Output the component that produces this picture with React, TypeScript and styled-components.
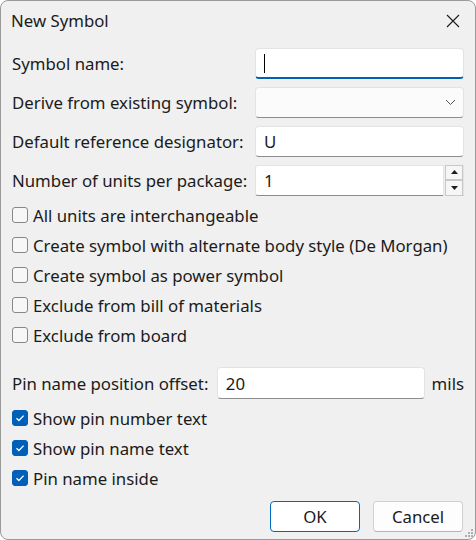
import React from "react";
import styled, { createGlobalStyle } from "styled-components";

const GlobalStyle = createGlobalStyle`
	html, body {
		margin: 0;
		padding: 0;
		background: #ffffff;
	}
	* {
		box-sizing: border-box;
	}
`;

const Window = styled.div`
	width: 476px;
	height: 540px;
	background: #f0f0f0;
	border: 1px solid #9a9a9a;
	border-radius: 8px;
	font-family: "Noto Sans", "Open Sans", sans-serif;
	font-size: 16.8px;
	color: #1b1b1b;
	display: flex;
	flex-direction: column;
	overflow: hidden;
	position: relative;
`;

const TitleBar = styled.div`
	height: 39px;
	display: flex;
	align-items: center;
	justify-content: space-between;
	padding: 0 14px 0 10px;
`;

const CloseButton = styled.div`
	width: 16px;
	height: 16px;
	display: flex;
	align-items: center;
	justify-content: center;
`;

const Body = styled.div`
	padding: 8px 11px 0 11px;
	display: flex;
	flex-direction: column;
	flex: 1;
`;

const FieldGrid = styled.div`
	display: grid;
	grid-template-columns: 243px 1fr;
	grid-auto-rows: 31px;
	row-gap: 8px;
	align-items: center;
`;

const Label = styled.label`
	white-space: nowrap;
`;

const Field = styled.div<{ $focused?: boolean; $dim?: boolean }>`
	height: 31px;
	background: ${(p) => (p.$dim ? "#fbfbfb" : "#ffffff")};
	border: 1px solid #e3e3e3;
	border-bottom: ${(p) => (p.$focused ? "2px solid #005fb8" : "1px solid #8d8d8d")};
	border-radius: 4px;
	display: flex;
	align-items: center;
	padding-left: 8px;
`;

const Caret = styled.div`
	width: 1px;
	height: 19px;
	background: #000;
`;

const Chevron = styled.div`
	margin-left: auto;
	margin-right: 7px;
	display: flex;
`;

const SpinField = styled.div`
	height: 31px;
	background: #ffffff;
	border: 1px solid #e3e3e3;
	border-bottom: 1px solid #8d8d8d;
	border-radius: 3px 0 0 3px;
	display: flex;
	align-items: center;
`;

const SpinValue = styled.div`
	flex: 1;
	padding-left: 8px;
`;

const SpinButtons = styled.div`
	width: 20px;
	height: 31px;
	margin-top: -1px;
	display: flex;
	flex-direction: column;
	background: #f0f0f0;
	border-left: 1px solid #e3e3e3;
`;

const SpinButton = styled.div`
	flex: 1;
	border: 1px solid #c7c7c7;
	background: #f6f6f6;
	display: flex;
	align-items: center;
	justify-content: center;
	margin-left: 1px;
`;

const CheckList = styled.div`
	display: flex;
	flex-direction: column;
	margin-top: 4px;
`;

const CheckRow = styled.label`
	height: 30px;
	display: flex;
	align-items: center;
	gap: 5px;
	white-space: nowrap;
`;

const Box = styled.span<{ $checked?: boolean }>`
	width: 16px;
	height: 16px;
	flex: none;
	border-radius: 3px;
	border: 1px solid ${(p) => (p.$checked ? "#005fb8" : "#888888")};
	background: ${(p) => (p.$checked ? "#005fb8" : "#f7f7f7")};
	display: flex;
	align-items: center;
	justify-content: center;
`;

const OffsetRow = styled.div`
	display: flex;
	align-items: center;
	margin-top: 17px;
	height: 32px;
`;

const OffsetLabel = styled.span`
	width: 206px;
	white-space: nowrap;
`;

const OffsetField = styled(Field)`
	width: 209px;
	height: 32px;
`;

const Unit = styled.span`
	margin-left: 7px;
`;

const ButtonRow = styled.div`
	display: flex;
	justify-content: flex-end;
	gap: 13px;
	margin-top: 8px;
	padding-right: 1px;
`;

const Button = styled.button<{ $primary?: boolean }>`
	width: 90px;
	height: 31px;
	font: inherit;
	color: #1b1b1b;
	background: ${(p) => (p.$primary ? "#ffffff" : "#fdfdfd")};
	border: 1px solid ${(p) => (p.$primary ? "#0067c0" : "#d0d0d0")};
	border-bottom-color: ${(p) => (p.$primary ? "#0067c0" : "#b5b5b5")};
	border-radius: 4px;
	padding: 0;
`;

const Grip = styled.div`
	position: absolute;
	right: 1px;
	bottom: 1px;
	display: flex;
`;

const Check = () => (
	<svg width="10" height="8" viewBox="0 0 10 8">
		<path d="M1.5 4.2 L3.9 6.5 L8.6 1.6" fill="none" stroke="#fff" strokeWidth="1.3" />
	</svg>
);

const CheckItem = ({ label, checked }: { label: string; checked?: boolean }) => (
	<CheckRow>
		<Box $checked={checked}>{checked && <Check />}</Box>
		{label}
	</CheckRow>
);

const App = () => {
	return (
		<>
			<GlobalStyle />
			<Window>
				<TitleBar>
					<span>New Symbol</span>
					<CloseButton>
						<svg width="14" height="14" viewBox="0 0 14 14">
							<path d="M1 1 L13 13 M13 1 L1 13" stroke="#1b1b1b" strokeWidth="1.1" />
						</svg>
					</CloseButton>
				</TitleBar>
				<Body>
					<FieldGrid>
						<Label>Symbol name:</Label>
						<Field $focused>
							<Caret />
						</Field>
						<Label>Derive from existing symbol:</Label>
						<Field $dim>
							<Chevron>
								<svg width="11" height="7" viewBox="0 0 11 7">
									<path d="M1 1 L5.5 5.5 L10 1" fill="none" stroke="#555" strokeWidth="1" />
								</svg>
							</Chevron>
						</Field>
						<Label>Default reference designator:</Label>
						<Field>U</Field>
						<Label>Number of units per package:</Label>
						<SpinField>
							<SpinValue>1</SpinValue>
							<SpinButtons>
								<SpinButton>
									<svg width="7" height="4" viewBox="0 0 7 4">
										<path d="M0 4 L3.5 0 L7 4 Z" fill="#1b1b1b" />
									</svg>
								</SpinButton>
								<SpinButton>
									<svg width="7" height="4" viewBox="0 0 7 4">
										<path d="M0 0 L3.5 4 L7 0 Z" fill="#1b1b1b" />
									</svg>
								</SpinButton>
							</SpinButtons>
						</SpinField>
					</FieldGrid>
					<CheckList>
						<CheckItem label="All units are interchangeable" />
						<CheckItem label="Create symbol with alternate body style (De Morgan)" />
						<CheckItem label="Create symbol as power symbol" />
						<CheckItem label="Exclude from bill of materials" />
						<CheckItem label="Exclude from board" />
					</CheckList>
					<OffsetRow>
						<OffsetLabel>Pin name position offset:</OffsetLabel>
						<OffsetField>20</OffsetField>
						<Unit>mils</Unit>
					</OffsetRow>
					<CheckList>
						<CheckItem label="Show pin number text" checked />
						<CheckItem label="Show pin name text" checked />
						<CheckItem label="Pin name inside" checked />
					</CheckList>
					<ButtonRow>
						<Button $primary>OK</Button>
						<Button>Cancel</Button>
					</ButtonRow>
				</Body>
				<Grip>
					<svg width="9" height="9" viewBox="0 0 9 9">
						<g fill="#b0b0b0">
							<rect x="6" y="0" width="2" height="2" />
							<rect x="3" y="3" width="2" height="2" />
							<rect x="6" y="3" width="2" height="2" />
							<rect x="0" y="6" width="2" height="2" />
							<rect x="3" y="6" width="2" height="2" />
							<rect x="6" y="6" width="2" height="2" />
						</g>
					</svg>
				</Grip>
			</Window>
		</>
	);
};

export default App;
